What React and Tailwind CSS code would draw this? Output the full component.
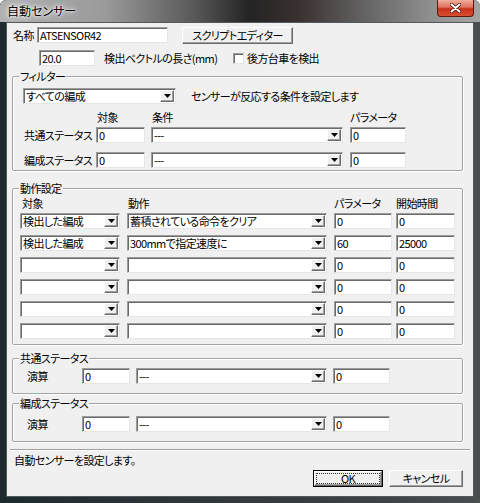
const FONT = "font-['Noto_Sans_CJK_JP',sans-serif] [font-feature-settings:'palt']"

const SUNKEN =
  'bg-white border border-t-[#9c9c9c] border-l-[#9c9c9c] border-r-[#e6e6e6] border-b-[#e6e6e6] shadow-[inset_1px_1px_0_#6a6a6a]'
const RAISED =
  'bg-[#f0f0f0] border border-t-white border-l-white border-r-[#6a6a6a] border-b-[#6a6a6a] shadow-[inset_-1px_-1px_0_#a0a0a0]'

const ACTIONS = [
  { target: '検出した編成', action: '蓄積されている命令をクリア', param: '0', start: '0' },
  { target: '検出した編成', action: '300mmで指定速度に', param: '60', start: '25000' },
  { target: '', action: '', param: '0', start: '0' },
  { target: '', action: '', param: '0', start: '0' },
  { target: '', action: '', param: '0', start: '0' },
  { target: '', action: '', param: '0', start: '0' },
]

function TextBox({ w, value, className = '' }) {
  return (
    <div className={`${w} h-[16px] shrink-0 ${SUNKEN} ${className}`}>
      <span className="block pl-[2px] leading-[14px] text-[11px] whitespace-nowrap">{value}</span>
    </div>
  )
}

function Combo({ w, value, className = '' }) {
  return (
    <div className={`${w} h-[16px] shrink-0 flex ${SUNKEN} ${className}`}>
      <span className="flex-1 pl-[2px] leading-[14px] text-[11px] whitespace-nowrap overflow-hidden">{value}</span>
      <span className={`w-[14px] h-[12px] mt-[1px] mr-[1px] flex items-center justify-center ${RAISED}`}>
        <svg width="7" height="4" viewBox="0 0 7 4">
          <polygon points="0,0 7,0 3.5,4" fill="#000" />
        </svg>
      </span>
    </div>
  )
}

function Group({ label, h, className = '', children }) {
  return (
    <div
      className={`relative ml-[5px] w-[451px] ${h} border border-[#a3a3a3] rounded-[2px] shadow-[inset_1px_1px_0_#fff,1px_1px_0_#fff] ${className}`}
    >
      <span className="absolute -top-[8px] left-[6px] bg-[#f0f0f0] px-[1px] leading-[14px] text-[11px] whitespace-nowrap">
        {label}
      </span>
      {children}
    </div>
  )
}

function TitleBar() {
  return (
    <div className="h-[22px] shrink-0 flex items-start justify-between rounded-t-[6px] bg-[linear-gradient(90deg,#b0b0b0_0%,#9a9a9a_22%,#5a5a5a_40%,#242424_52%,#3a3030_62%,#6a6a6a_78%,#969696_92%,#a4a4a4_100%)]">
      <span className="ml-[7px] mt-[3px] text-[12px] leading-[16px] text-black [text-shadow:0_0_4px_#fff,0_0_8px_#fff,0_0_2px_#fff]">
        自動センサー
      </span>
      <span className="mr-[6px] w-[37px] h-[17px] flex items-center justify-center rounded-b-[4px] border border-[#5b1a10] border-t-0 bg-[linear-gradient(180deg,#f0b0a0_0%,#e0705a_45%,#c8301a_55%,#d85030_100%)]">
        <svg width="11" height="10" viewBox="0 0 11 10">
          <path d="M1.5 1.5 L9.5 8.5 M9.5 1.5 L1.5 8.5" stroke="#3a1008" strokeWidth="3.4" strokeLinecap="round" />
          <path d="M1.5 1.5 L9.5 8.5 M9.5 1.5 L1.5 8.5" stroke="#fff" strokeWidth="2" strokeLinecap="round" />
        </svg>
      </span>
    </div>
  )
}

export default function App() {
  return (
    <div
      className={`w-[480px] h-[503px] flex flex-col overflow-hidden rounded-t-[6px] bg-[linear-gradient(90deg,#1c2a2e_0%,#2c3438_30%,#3a3e40_70%,#4a4e50_100%)] text-black ${FONT}`}
    >
      <TitleBar />
      <div className="mx-[6px] h-[475px] shrink-0 border border-[#52595c] bg-[#f0f0f0] flex flex-col text-[11px] tracking-[-0.6px] whitespace-nowrap">
        {/* name row */}
        <div className="mt-[4px] h-[17px] flex items-start">
          <span className="ml-[6px] w-[24px] leading-[16px]">名称</span>
          <TextBox w="w-[131px]" value="ATSENSOR42" />
          <button className={`ml-[14px] w-[111px] h-[17px] leading-[13px] text-[11px] tracking-[-0.6px] ${RAISED}`}>
            スクリプトエディター
          </button>
        </div>

        {/* vector row */}
        <div className="mt-[6px] h-[16px] flex items-center">
          <TextBox w="w-[56px]" value="20.0" className="ml-[32px]" />
          <span className="ml-[9px] w-[129px] leading-[14px]">検出ベクトルの長さ(mm)</span>
          <span className={`w-[11px] h-[11px] ${SUNKEN}`} />
          <span className="ml-[3px] leading-[14px]">後方台車を検出</span>
        </div>

        {/* filter */}
        <Group label="フィルター" h="h-[95px]" className="mt-[10px]">
          <div className="mt-[11px] flex items-center">
            <Combo w="w-[153px]" value="すべての編成" className="ml-[10px]" />
            <span className="ml-[15px] leading-[14px]">センサーが反応する条件を設定します</span>
          </div>
          <div className="mt-[7px] h-[12px] flex leading-[12px]">
            <span className="ml-[84px] w-[55px]">対象</span>
            <span className="w-[198px]">条件</span>
            <span>パラメータ</span>
          </div>
          {['共通ステータス', '編成ステータス'].map((label, i) => (
            <div key={label} className={`${i === 0 ? 'mt-[4px]' : 'mt-[9px]'} h-[16px] flex items-center`}>
              <span className="ml-[11px] w-[72px] leading-[14px]">{label}</span>
              <TextBox w="w-[49px]" value="0" />
              <Combo w="w-[192px]" value="---" className="ml-[6px]" />
              <TextBox w="w-[56px]" value="0" className="ml-[7px]" />
            </div>
          ))}
        </Group>

        {/* actions */}
        <Group label="動作設定" h="h-[157px]" className="mt-[17px]">
          <div className="mt-[8px] h-[12px] flex leading-[12px]">
            <span className="ml-[9px] w-[106px]">対象</span>
            <span className="w-[206px]">動作</span>
            <span className="w-[62px]">パラメータ</span>
            <span>開始時間</span>
          </div>
          <div className="mt-[4px] flex flex-col gap-[6px]">
            {ACTIONS.map((a, i) => (
              <div key={i} className="h-[16px] flex">
                <Combo w="w-[100px]" value={a.target} className="ml-[7px]" />
                <Combo w="w-[200px]" value={a.action} className="ml-[7px]" />
                <TextBox w="w-[58px]" value={a.param} className="ml-[7px]" />
                <TextBox w="w-[59px]" value={a.start} className="ml-[4px]" />
              </div>
            ))}
          </div>
        </Group>

        {/* shared status */}
        <Group label="共通ステータス" h="h-[36px]" className="mt-[13px]">
          <div className="mt-[9px] h-[16px] flex items-center">
            <span className="ml-[14px] w-[55px] leading-[14px]">演算</span>
            <TextBox w="w-[48px]" value="0" />
            <Combo w="w-[191px]" value="---" className="ml-[6px]" />
            <TextBox w="w-[57px]" value="0" className="ml-[6px]" />
          </div>
        </Group>

        {/* train status */}
        <Group label="編成ステータス" h="h-[39px]" className="mt-[9px]">
          <div className="mt-[12px] h-[16px] flex items-center">
            <span className="ml-[14px] w-[55px] leading-[14px]">演算</span>
            <TextBox w="w-[48px]" value="0" />
            <Combo w="w-[191px]" value="---" className="ml-[6px]" />
            <TextBox w="w-[57px]" value="0" className="ml-[6px]" />
          </div>
        </Group>

        <div className="mt-[7px] ml-[3px] w-[460px] h-[2px] border-t border-t-[#a0a0a0] border-b border-b-white" />
        <p className="mt-[2px] pl-[7px] h-[14px] leading-[14px]">自動センサーを設定します。</p>

        <div className="mt-[3px] pr-[10px] flex justify-end gap-[6px]">
          <div className="w-[70px] h-[17px] border border-black">
            <div className={`h-full p-[1px] ${RAISED}`}>
              <div className="h-full flex items-center justify-center border border-dotted border-[#333] text-[11px] leading-[9px]">
                OK
              </div>
            </div>
          </div>
          <button className={`w-[74px] h-[17px] leading-[13px] text-[11px] tracking-[-0.6px] ${RAISED}`}>
            キャンセル
          </button>
        </div>
      </div>
    </div>
  )
}
